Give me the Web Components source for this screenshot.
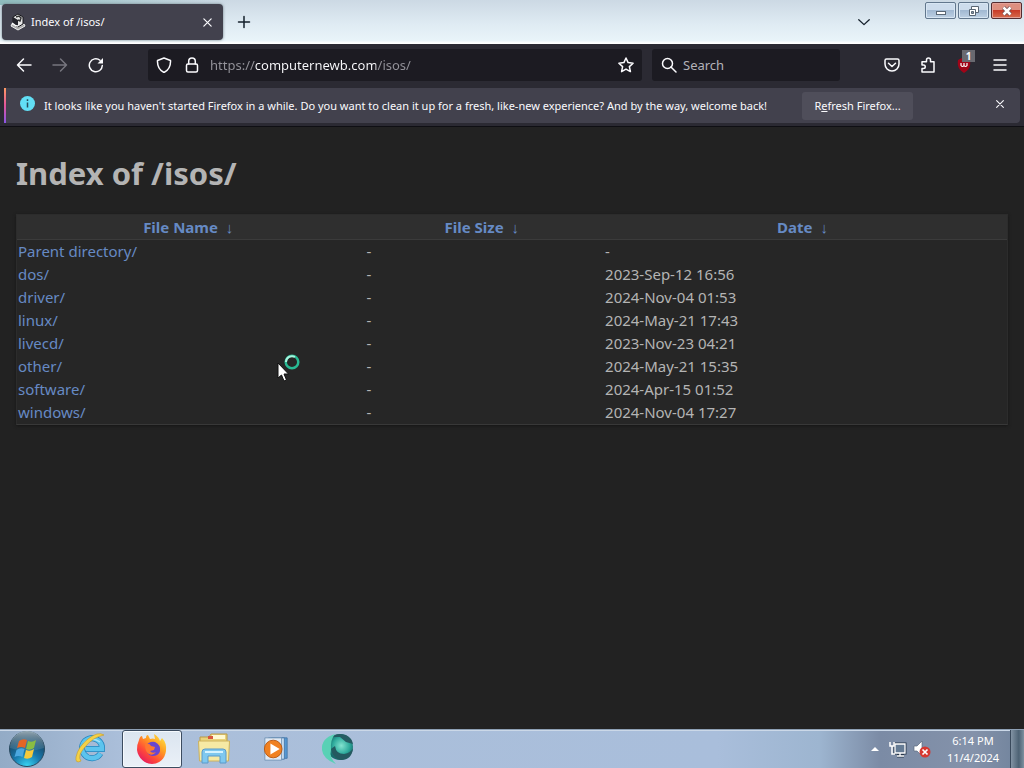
<!DOCTYPE html>
<html lang="en">
<head>
<meta charset="utf-8">
<meta name="viewport" content="width=device-width, initial-scale=1">
<title>Index of /isos/</title>
<style>
html, body { margin: 0; }
body { font-family: "Noto Sans", "Open Sans", sans-serif; font-size: 12px; background: #222; color: #b4b4b4; }
</style>
</head>
<body>
<desktop-shell></desktop-shell>
<script>
const base = `
*, *::before { box-sizing: border-box; }
button { font: inherit; color: inherit; background: none; border: 0; padding: 0; margin: 0; display: grid; place-items: center; }
svg { display: block; }
`;
function define(name, html, setup) {
  const template = document.createElement('template');
  template.innerHTML = html.replace('<style>', '<style>' + base);
  customElements.define(name, class extends HTMLElement {
    constructor() {
      super();
      this.attachShadow({ mode: 'open' }).append(template.content.cloneNode(true));
    }
    connectedCallback() { if (setup) setup(this, this.shadowRoot); }
  });
}

/* 16px line icons of the browser chrome */
const icons = {
  back: '<path d="M15 8H1.500M7.500 2 1.500 8l6 6"/>',
  forward: '<path d="M1 8h13.500M8.500 2l6 6-6 6"/>',
  reload: '<path d="M14.300 8.500A6.500 6.500 0 1 1 12 3.300"/><path d="M15 1v5.500H9.500z" fill="currentColor" stroke="none"/>',
  shield: '<path d="M8 1l6.500 2.500c.3 5.500-1.500 9.500-6.500 12C3 13 1.200 9 1.500 3.500z"/>',
  lock: '<rect x="2.500" y="7" width="11" height="8" rx="1.500"/><path d="M4.700 7V4.300a3.300 3.300 0 0 1 6.600 0V7"/>',
  star: '<path d="M8 1l2.100 4.600 5 .6-3.700 3.400 1 5L8 12.100l-4.400 2.500 1-5L.9 6.200l5-.6z"/>',
  search: '<circle cx="6.500" cy="6.500" r="5"/><path d="M10 10l5 5"/>',
  pocket: '<path d="M2.500 2h11A1.500 1.500 0 0 1 15 3.500V7a7 7 0 0 1-14 0V3.500A1.500 1.500 0 0 1 2.500 2zM4.500 6.200 8 9.500l3.500-3.300"/>',
  puzzle: '<path d="M2 15V11.500h1.500a1.700 1.700 0 0 0 0-3.500H2V4.800h4.500V3a2 2 0 0 1 4 0v1.800H14V15z"/>',
  menu: '<path d="M2 3h12M2 8h12M2 13h12"/>',
  close: '<path d="M3.500 3.500l9 9M12.500 3.500l-9 9"/>',
  plus: '<path d="M8 2.500v11M2.500 8h11"/>',
  chevron: '<path d="M2 5.500l6 5.500 6-5.500"/>'
};
define('line-icon', `<style>:host { display: block; }</style>
<svg width="16" height="16" viewBox="0 0 16 16" fill="none" stroke="currentColor" stroke-width="1.5" stroke-linecap="round" stroke-linejoin="round" aria-hidden="true"></svg>`,
(host, root) => {
  const svg = root.querySelector('svg'), size = host.getAttribute('size') || 16;
  svg.setAttribute('width', size);
  svg.setAttribute('height', size);
  svg.innerHTML = icons[host.getAttribute('name')];
});

define('window-controls', `<style>
:host { display: flex; gap: 2px; align-self: flex-start; padding: 2px 2px 0 0; }
button { width: 31px; height: 17px; border: 1px solid #62778d; border-radius: 2px; box-shadow: inset 0 0 0 1px #d8e6f3; background: linear-gradient(#cddcec 48%, #a2b9d2 50%, #bdd0e3); }
.close { border-color: #542c30; box-shadow: inset 0 0 0 1px #e2a198; background: linear-gradient(#dd8f80 45%, #c83b28 50%, #d66b4c); }
</style>
<button type="button" aria-label="Minimize"><svg width="14" height="12"><rect x="2.500" y="6.500" width="9" height="3" fill="#fff" stroke="#596674"/></svg></button>
<button type="button" aria-label="Restore"><svg width="14" height="12" stroke="#596674" fill="#fff"><path d="M4.500 1.500h7v6h-7z"/><path d="M2.500 4.500h6v6h-6z"/><path d="M4.500 6.500h2v2h-2z" fill="#8798a8"/></svg></button>
<button type="button" class="close" aria-label="Close"><svg width="14" height="12"><path d="M3.500 2.500l7 7M10.500 2.500l-7 7" stroke="#705052" stroke-width="4"/><path d="M3.500 2.500l7 7M10.500 2.500l-7 7" stroke="#fff" stroke-width="2.500"/></svg></button>`);

define('tab-strip', `<style>
:host { display: flex; height: 44px; color: #15202b; background: linear-gradient(90deg, #8fbcbd 0, transparent 230px) top / 100% 5px no-repeat, linear-gradient(#ccd9e4, #dfebf3 55%, #e9f4f9 92%, #fff 98%); }
.tab { display: flex; align-items: center; gap: 5px; width: 221px; height: 36px; margin: 4px 0 0 2px; padding: 0 9px 0 8px; border-radius: 4px; background: #42414d; color: #fbfbfe; box-shadow: 0 0 3px #6c7c85; }
.title { flex: 1; text-align: left; justify-items: start; font-size: 11px; line-height: 18px; }
.new { width: 32px; margin-left: 5px; }
.spacer { flex: 1; }
.list { width: 32px; margin-right: 45px; }
</style>
<div class="tab">
<svg width="16" height="18" viewBox="0 0 16 18" aria-hidden="true"><path d="M2 11l6 3 6-3 1 2-7 4-7-4z" fill="#aaa" stroke="#eee"/><path d="M3 4l5-3 5 3v7l-5 3-5-3z" fill="#e8e8e8" stroke="#17171b"/><path d="M3 4l5 3v7l-5-3z" fill="#24242b"/><path d="M6 4l3-1 2 2-1 3-2-1" fill="none" stroke="#333" stroke-width="1.500"/><path d="M2 10c2 2 4 3 6 3" fill="none" stroke="#fff" stroke-width="1.500"/></svg>
<button type="button" class="title">Index of /isos/</button>
<button type="button" aria-label="Close tab"><line-icon name="close" size="13"></line-icon></button>
</div>
<button type="button" class="new" aria-label="New tab"><line-icon name="plus"></line-icon></button>
<span class="spacer"></span>
<button type="button" class="list" aria-label="List all tabs"><line-icon name="chevron" size="14"></line-icon></button>
<window-controls></window-controls>`);

define('nav-toolbar', `<style>
:host { display: flex; align-items: center; height: 43px; padding: 0 6px 2px; background: #2b2a33; color: #fbfbfe; }
button { width: 36px; height: 32px; }
.dim { color: #77767f; }
.field { display: flex; align-items: center; height: 32px; background: #1c1b22; border-radius: 3px; }
.url { flex: 1; margin-left: 34px; }
.url button { width: 28px; }
.url .star { width: 32px; }
.url button:first-child { margin-left: 2px; }
input { font: inherit; font-size: 13px; line-height: 20px; min-width: 0; height: 24px; border: 0; padding: 0; margin: 0; outline: 0; background: none; color: #fbfbfe; }
#address { flex: 1; margin-left: 4px; background: linear-gradient(90deg, #95949b 45px, #fbfbfe 45px 166px, #95949b 166px); -webkit-background-clip: text; background-clip: text; -webkit-text-fill-color: transparent; }
.search { width: 188px; margin: 0 34px 0 10px; padding-left: 9px; gap: 6px; }
.search input { flex: 1; }
input::placeholder { color: #b3b2b9; opacity: 1; }
.ext { position: relative; }
.badge { position: absolute; right: 7px; top: 1px; width: 13px; height: 12px; background: #696970; font-size: 10px; line-height: 12px; font-weight: 700; }
</style>
<button type="button" aria-label="Back"><line-icon name="back"></line-icon></button>
<button type="button" class="dim" aria-label="Forward"><line-icon name="forward"></line-icon></button>
<button type="button" aria-label="Reload"><line-icon name="reload"></line-icon></button>
<div class="field url">
<button type="button" aria-label="Tracking protection"><line-icon name="shield"></line-icon></button>
<button type="button" aria-label="Site information"><line-icon name="lock"></line-icon></button>
<input id="address" type="text" aria-label="Address" value="https://computernewb.com/isos/" spellcheck="false">
<button type="button" class="star" aria-label="Bookmark this page"><line-icon name="star"></line-icon></button>
</div>
<div class="field search"><line-icon name="search"></line-icon><input type="search" aria-label="Search" placeholder="Search"></div>
<button type="button" aria-label="Save to Pocket"><line-icon name="pocket"></line-icon></button>
<button type="button" aria-label="Extensions"><line-icon name="puzzle"></line-icon></button>
<button type="button" class="ext" aria-label="uBlock Origin">
<svg width="16" height="16" viewBox="0 0 16 16"><path d="M8 0l6 3c1 6-1 10-6 13C3 13 1 9 2 3z" fill="#a00418"/><path d="M5 6v2.500q1.500 2 3 0V6v2.500q1.500 2 3 0V6" fill="none" stroke="#fff" stroke-width="1.200"/></svg>
<span class="badge">1</span></button>
<button type="button" aria-label="Open application menu"><line-icon name="menu"></line-icon></button>`);

define('notification-bar', `<style>
:host { display: flex; align-items: stretch; background: #2b2a33; padding: 1px 4px 3px; color: #fbfbfe; font-size: 11px; line-height: 16px; border-bottom: 1px solid #0f0f14; }
.bar { flex: 1; display: flex; align-items: center; min-height: 35px; padding-right: 8px; background: #42414d; border-radius: 0 4px 4px 0; }
.bar::before { content: ""; width: 2px; align-self: stretch; background: linear-gradient(#ff9a62, #e3559b 50%, #8a55e8); }
.info { margin: 0 9px 4px 14px; }
p { margin: 0 35px 0 0; }
.refresh { width: 111px; height: 28px; border-radius: 3px; background: #4f4e5a; }
.refresh span { display: block; }
.dismiss { width: 24px; height: 24px; margin-left: auto; margin-bottom: 4px; }
</style>
<div class="bar" role="status">
<svg class="info" width="15" height="15" viewBox="0 0 15 15" aria-hidden="true"><circle cx="7.500" cy="7.500" r="7.500" fill="#62dff5"/><path d="M7.500 6.500v5M7.500 3.200v1.700" stroke="#274c5b" stroke-width="1.500"/></svg>
<p>It looks like you haven't started Firefox in a while. Do you want to clean it up for a fresh, like-new experience? And by the way, welcome back!</p>
<button type="button" class="refresh"><span>R<u>e</u>fresh Firefox...</span></button>
<button type="button" class="dismiss" aria-label="Dismiss"><line-icon name="close" size="12"></line-icon></button>
</div>`);

define('file-index', `<style>
:host { display: block; flex: 1; padding: 25px 16px 16px; background: #222; color: #b4b4b4; font-size: 15px; line-height: 21px; }
h1 { margin: 0 0 20px; font-size: 31px; line-height: 42px; }
table { width: 100%; table-layout: fixed; border-collapse: separate; border-spacing: 0; background: #262626; border: 1px solid #2c2c2c; border-bottom-color: #383838; box-shadow: 0 1px 3px #161616; }
th { padding: 2px 7px 1px 1px; background: #2f2f2f; border-bottom: 1px solid #3b3b3b; text-align: center; color: #6a8ecb; }
th:nth-child(1) { width: 35.2%; }
th:nth-child(2) { width: 24.1%; }
td { padding: 1px; text-align: left; }
tbody { transform: none; }
a { color: #668ac4; text-decoration: none; }
th a + a { margin-left: 4px; }
</style>
<h1>Index of /isos/</h1>
<table>
<thead><tr><th scope="col"><a href="#name">File Name</a> <a href="#name-down" aria-label="Sort by name, descending">↓</a></th><th scope="col"><a href="#size">File Size</a> <a href="#size-down" aria-label="Sort by size, descending">↓</a></th><th scope="col"><a href="#date">Date</a> <a href="#date-down" aria-label="Sort by date, descending">↓</a></th></tr></thead>
<tbody></tbody>
</table>`, (host, root) => {
  const rows = [
    ['Parent directory/', '-'],
    ['dos/', '2023-Sep-12 16:56'],
    ['driver/', '2024-Nov-04 01:53'],
    ['linux/', '2024-May-21 17:43'],
    ['livecd/', '2023-Nov-23 04:21'],
    ['other/', '2024-May-21 15:35'],
    ['software/', '2024-Apr-15 01:52'],
    ['windows/', '2024-Nov-04 17:27']
  ];
  root.querySelector('tbody').innerHTML = rows.map(([name, date]) =>
    `<tr><td><a href="#${name}">${name}</a></td><td>-</td><td>${date}</td></tr>`).join('');
});

define('task-bar', `<style>
:host { display: flex; align-items: center; height: 39px; color: #fff; border-top: 1px solid #8ea0b5; box-shadow: inset 0 1px #cbd8e8; background: linear-gradient(90deg, #93abc6, #abbfda 12%, #a9bedb 70%, #9db5d0 80%, #7b8ba5 86%, #8492aa 95%, #6f829b); }
.start { width: 54px; height: 38px; margin-right: 6px; }
.app { width: 60px; height: 38px; margin-right: 2px; }
.app.active { border: 1px solid #3c4c60; border-radius: 3px; background: linear-gradient(#dbe5f0, #eaf0f7); box-shadow: inset 0 0 0 1px #f5f9fd; }
.spacer { flex: 1; }
.tray { display: flex; align-items: center; gap: 6px; margin-right: 14px; }
time { display: block; width: 56px; text-align: center; font-size: 11px; line-height: 17px; }
.clock { width: 56px; margin-right: 9px; }
.peek { width: 14px; height: 38px; border-left: 1px solid #39495b; background: linear-gradient(90deg, #8293a4, #4d6274 60%, #7d919f); }
</style>
<button type="button" class="start" aria-label="Start"><svg width="38" height="38" viewBox="0 0 38 38">
<defs><radialGradient id="orb" cx=".5" cy="1" r=".9"><stop offset="0" stop-color="#39d8f5"/><stop offset=".45" stop-color="#1879ad"/><stop offset="1" stop-color="#183852"/></radialGradient><linearGradient id="shine" x2="0" y2="1"><stop stop-color="#d6e3e7"/><stop offset="1" stop-color="#6f98aa" stop-opacity=".3"/></linearGradient></defs>
<circle cx="19" cy="19" r="17.500" fill="url(#orb)" stroke="#294a60"/><path d="M2 18a17 17 0 0 1 34 0q-17 6-34 0z" fill="url(#shine)" opacity=".65"/>
<path d="M11 11q4-3 8-1l-2 8q-4-2-8 0z" fill="#e56525"/><path d="M20 11q4 2 8-1l-2 8q-4 3-8 1z" fill="#89bd42"/><path d="M8.500 20q4-3 8-1l-2 8q-4-2-8 0z" fill="#4ba7df"/><path d="M18 20q4 2 8-1l-2 8q-4 3-8 1z" fill="#f6ca3b"/></svg></button>
<button type="button" class="app" aria-label="Internet Explorer"><svg width="34" height="34" viewBox="0 0 34 34">
<path d="M27.500 21.500A10 10 0 1 1 29 17H13" fill="none" stroke="#2585bd" stroke-width="6"/><path d="M27.500 21.500A10 10 0 1 1 29 17H13" fill="none" stroke="#5cc4ee" stroke-width="4.500"/><path d="M11 11q8-7 16-1" fill="none" stroke="#a5e3f8" stroke-width="1.500"/>
<path d="M31 3q-6-4-16 4Q5 15 3 25q-1 7 5 4-4-5 4-14Q20 5 31 3z" fill="#f4d147" stroke="#c69b28" stroke-width=".6"/></svg></button>
<button type="button" class="app active" aria-label="Firefox"><svg width="32" height="32" viewBox="0 0 32 32">
<defs><linearGradient id="fox" x1="1" x2=".2" y2="1"><stop stop-color="#fff34c"/><stop offset=".4" stop-color="#ff9e22"/><stop offset=".7" stop-color="#ff4b38"/><stop offset="1" stop-color="#e31466"/></linearGradient></defs>
<path d="M3 7q1-4 3-4l1 3 3-1q0-3 2-3l2 4q3-1 5 0l-1-5q5 3 6 7l2-3q5 5 4 13C29 26 23 31 16 31S2 25 1 17q0-6 2-10z" fill="url(#fox)"/><path d="M10 13q3-5 9-4 6 3 5 9-1 5-8 5-6-1-6-10z" fill="#6946d0"/><path d="M9 11q5-1 6 2l4 1-1 3-4 1q2 3 6 1-3 4-7 2-4-2-4-10z" fill="#ff7830"/></svg></button>
<button type="button" class="app" aria-label="Windows Explorer"><svg width="34" height="32" viewBox="0 0 34 32">
<path d="M3 4h9l2-3h16v22H3z" fill="#ead37c" stroke="#b99a46"/><path d="M15 2h13v4H15z" fill="#fff9d0"/><path d="M11 3h5v3h-5z" fill="#d7573d"/><path d="M1.500 8h31l-1 20h-29z" fill="#f6e9a4" stroke="#cdb25c"/><path d="M5 30V19q0-3 3-3h18q3 0 3 3v11h-6v-7H11v7z" fill="#7fc8ef" stroke="#5b9aca"/><path d="M8 19h18" stroke="#d7f3ff" stroke-width="2"/></svg></button>
<button type="button" class="app" aria-label="Windows Media Player"><svg width="28" height="26" viewBox="0 0 30 28">
<path d="M10 2h17v22H10z" fill="#5598d2" stroke="#4779aa"/><path d="M7 2h17v23H7z" fill="#c9def1" stroke="#4779aa"/><path d="M3 2h18v24H3z" fill="#dfe9f4" stroke="#7595b6"/><circle cx="12" cy="14" r="9.500" fill="#f08121" stroke="#b85710"/><path d="M9 8v12l10-6z" fill="#fff"/></svg></button>
<button type="button" class="app" aria-label="Globe browser"><svg width="36" height="34" viewBox="0 0 36 34">
<defs><radialGradient id="globe" cx=".55" cy=".45"><stop stop-color="#83e3d0"/><stop offset=".65" stop-color="#2daa9b"/><stop offset="1" stop-color="#176b6c"/></radialGradient></defs><circle cx="20" cy="15" r="13" fill="url(#globe)"/><path d="M12 5q5-5 14-2 6 3 7 9l-7-2-6-5z" fill="#255c62"/><path d="M15 14q1 8 9 8 7-1 9-6-1 12-12 12-9-2-10-11z" fill="#245a60"/><path d="M15 2Q1 6 2 18q1 9 14 14-7-7-5-14Q10 8 15 2z" fill="#59d1b5"/></svg></button>
<span class="spacer"></span>
<div class="tray">
<button type="button" aria-label="Show hidden icons"><svg width="16" height="12"><path d="M4 8l4-4 4 4z" fill="#fff"/></svg></button>
<button type="button" aria-label="Network"><svg width="18" height="18" viewBox="0 0 18 18"><path d="M6 4h10v9H6zM8 16h7M11 13v3" fill="#657b94" stroke="#27364a" stroke-width="3"/><path d="M6 4h10v9H6zM8 16h7M11 13v3" fill="#657b94" stroke="#fff" stroke-width="1.300"/><path d="M1 2v4h4V2M3 6v8h3" fill="none" stroke="#fff" stroke-width="1.500"/></svg></button>
<button type="button" aria-label="Volume muted"><svg width="18" height="18" viewBox="0 0 18 18"><path d="M1 6h3l5-5v15l-5-5H1z" fill="#fff" stroke="#5c6c80" stroke-width=".7"/><circle cx="12" cy="12" r="5.500" fill="#d63831"/><path d="M9.500 9.500l5 5M14.500 9.500l-5 5" stroke="#fff" stroke-width="1.700"/></svg></button>
</div>
<button type="button" class="clock" aria-label="Date and time"><time>6:14 PM</time><time>11/4/2024</time></button>
<button type="button" class="peek" aria-label="Show desktop"></button>`);

/* Busy pointer floating over the desktop */
define('busy-pointer', `<style>
:host { position: absolute; left: 277px; top: 353px; pointer-events: none; }
</style>
<svg width="24" height="30" viewBox="0 0 24 30" aria-hidden="true"><path d="M1 10v15l3.500-3 2.500 6 2.500-1-2.500-6h4.500z" fill="#fff" stroke="#111"/><circle cx="15" cy="9" r="6.300" fill="none" stroke="#28b993" stroke-width="2.500"/><path d="M9 9a6 6 0 0 1 9-5" fill="none" stroke="#a9f4de" stroke-width="2"/></svg>`);

define('desktop-shell', `<style>
:host { position: relative; display: flex; flex-direction: column; min-height: 100vh; }
</style>
<tab-strip></tab-strip>
<nav-toolbar></nav-toolbar>
<notification-bar></notification-bar>
<file-index></file-index>
<task-bar></task-bar>
<busy-pointer></busy-pointer>`);
</script>
</body>
</html>
